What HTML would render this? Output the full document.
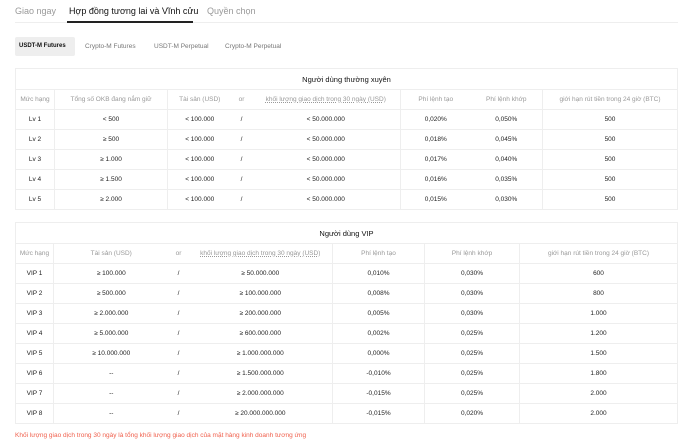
<!DOCTYPE html>
<html><head><meta charset="utf-8"><style>
*{margin:0;padding:0;box-sizing:border-box}
body{width:700px;height:447px;background:#fff;font-family:"Liberation Sans",sans-serif;color:#222;position:relative;overflow:hidden}
.tabs{position:absolute;left:15px;top:0;width:663px;height:23px;border-bottom:1px solid #eee;font-size:9px}
.tabs span{position:absolute;top:6px;color:#999;white-space:nowrap}
.tabs .a{color:#111}
.ul{position:absolute;left:67px;top:21px;width:126px;height:2px;background:#222}
.sub{position:absolute;top:37px;height:19px;font-size:6.5px;line-height:19px;color:#777;padding:0 5px;white-space:nowrap}
.sub.a{background:#eee;color:#111;border-radius:2px;font-weight:bold;font-size:6px;padding:0 4px}
table{position:absolute;left:15px;width:663px;border-collapse:collapse;table-layout:fixed;font-size:6.5px;text-align:center}
td{height:20px;border-top:1px solid #eee;color:#222;white-space:nowrap}
table{border:1px solid #eee}
.t td{font-size:7.5px;color:#111;height:21px}
.h td{color:#999}
.b{border-right:1px solid #eee}
.u{text-decoration:underline dotted}
.note{position:absolute;left:15px;top:432px;font-size:6.5px;color:#f0604d}
</style></head><body>
<div class="tabs"><span style="left:0">Giao ngay</span><span class="a" style="left:54px">Hợp đồng tương lai và Vĩnh cửu</span><span style="left:192px">Quyền chọn</span></div>
<div class="ul"></div>
<div class="sub a" style="left:15px;width:60px">USDT-M Futures</div>
<div class="sub" style="left:80px">Crypto-M Futures</div>
<div class="sub" style="left:149px">USDT-M Perpetual</div>
<div class="sub" style="left:220px">Crypto-M Perpetual</div>

<table style="top:68px">
<colgroup><col style="width:39px"><col style="width:113px"><col style="width:64px"><col style="width:20px"><col style="width:149px"><col style="width:70px"><col style="width:72px"><col></colgroup>
<tr class="t"><td colspan="8">Người dùng thường xuyên</td></tr>
<tr class="h"><td class="b">Mức hạng</td><td class="b">Tổng số OKB đang nắm giữ</td><td>Tài sản (USD)</td><td>or</td><td class="b u">khối lượng giao dịch trong 30 ngày (USD)</td><td>Phí lệnh tạo</td><td class="b">Phí lệnh khớp</td><td>giới hạn rút tiền trong 24 giờ (BTC)</td></tr>
<tr><td class="b">Lv 1</td><td class="b">&lt; 500</td><td>&lt; 100.000</td><td>/</td><td class="b">&lt; 50.000.000</td><td>0,020%</td><td class="b">0,050%</td><td>500</td></tr>
<tr><td class="b">Lv 2</td><td class="b">≥ 500</td><td>&lt; 100.000</td><td>/</td><td class="b">&lt; 50.000.000</td><td>0,018%</td><td class="b">0,045%</td><td>500</td></tr>
<tr><td class="b">Lv 3</td><td class="b">≥ 1.000</td><td>&lt; 100.000</td><td>/</td><td class="b">&lt; 50.000.000</td><td>0,017%</td><td class="b">0,040%</td><td>500</td></tr>
<tr><td class="b">Lv 4</td><td class="b">≥ 1.500</td><td>&lt; 100.000</td><td>/</td><td class="b">&lt; 50.000.000</td><td>0,016%</td><td class="b">0,035%</td><td>500</td></tr>
<tr><td class="b">Lv 5</td><td class="b">≥ 2.000</td><td>&lt; 100.000</td><td>/</td><td class="b">&lt; 50.000.000</td><td>0,015%</td><td class="b">0,030%</td><td>500</td></tr>
</table>

<table style="top:222px">
<colgroup><col style="width:38px"><col style="width:115px"><col style="width:20px"><col style="width:144px"><col style="width:92px"><col style="width:95px"><col></colgroup>
<tr class="t"><td colspan="7">Người dùng VIP</td></tr>
<tr class="h"><td class="b">Mức hạng</td><td>Tài sản (USD)</td><td>or</td><td class="b u">khối lượng giao dịch trong 30 ngày (USD)</td><td class="b">Phí lệnh tạo</td><td class="b">Phí lệnh khớp</td><td>giới hạn rút tiền trong 24 giờ (BTC)</td></tr>
<tr><td class="b">VIP 1</td><td>≥ 100.000</td><td>/</td><td class="b">≥ 50.000.000</td><td class="b">0,010%</td><td class="b">0,030%</td><td>600</td></tr>
<tr><td class="b">VIP 2</td><td>≥ 500.000</td><td>/</td><td class="b">≥ 100.000.000</td><td class="b">0,008%</td><td class="b">0,030%</td><td>800</td></tr>
<tr><td class="b">VIP 3</td><td>≥ 2.000.000</td><td>/</td><td class="b">≥ 200.000.000</td><td class="b">0,005%</td><td class="b">0,030%</td><td>1.000</td></tr>
<tr><td class="b">VIP 4</td><td>≥ 5.000.000</td><td>/</td><td class="b">≥ 600.000.000</td><td class="b">0,002%</td><td class="b">0,025%</td><td>1.200</td></tr>
<tr><td class="b">VIP 5</td><td>≥ 10.000.000</td><td>/</td><td class="b">≥ 1.000.000.000</td><td class="b">0,000%</td><td class="b">0,025%</td><td>1.500</td></tr>
<tr><td class="b">VIP 6</td><td>--</td><td>/</td><td class="b">≥ 1.500.000.000</td><td class="b">-0,010%</td><td class="b">0,025%</td><td>1.800</td></tr>
<tr><td class="b">VIP 7</td><td>--</td><td>/</td><td class="b">≥ 2.000.000.000</td><td class="b">-0,015%</td><td class="b">0,025%</td><td>2.000</td></tr>
<tr><td class="b">VIP 8</td><td>--</td><td>/</td><td class="b">≥ 20.000.000.000</td><td class="b">-0,015%</td><td class="b">0,020%</td><td>2.000</td></tr>
</table>
<div class="note">Khối lượng giao dịch trong 30 ngày là tổng khối lượng giao dịch của mặt hàng kinh doanh tương ứng</div>
</body></html>
